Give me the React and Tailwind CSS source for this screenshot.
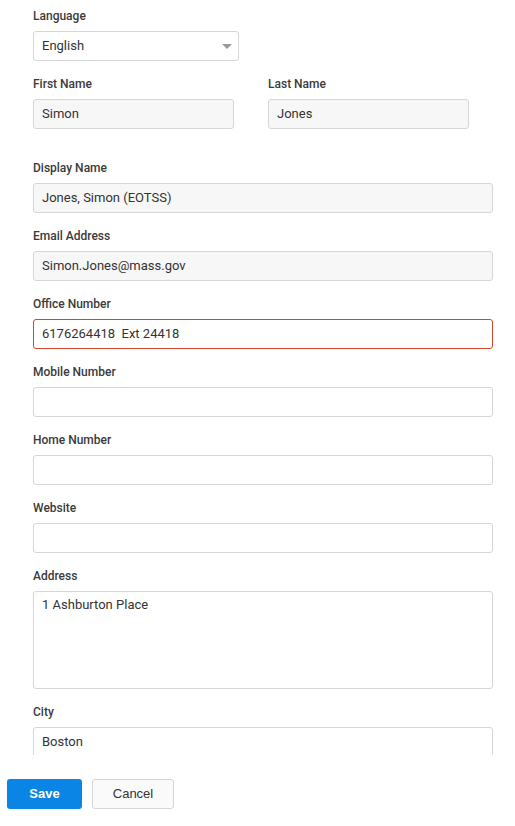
import React from 'react';

const font = { fontFamily: 'Roboto, "Noto Sans", sans-serif' };

function Label({ children }) {
  return <div className="mb-[7px] h-4 text-[12px] font-medium leading-4 text-[#3a3a3a]">{children}</div>;
}

function Field({ label, value = '', readOnly, invalid, width = 'w-[460px]', className = '' }) {
  const tone = invalid
    ? 'border-[#d5452b]'
    : 'border-[#d6d6d6]';
  const bg = readOnly ? 'bg-[#f7f7f7]' : 'bg-white';
  return (
    <div className={`mb-[15px] ${className}`}>
      <Label>{label}</Label>
      <div
        className={`flex h-[30px] ${width} items-center whitespace-pre rounded-[3px] border ${tone} ${bg} px-[8px] text-[13px] text-[#333]`}
      >
        {value}
      </div>
    </div>
  );
}

export default function App() {
  return (
    <div className="h-[826px] w-[515px] bg-white" style={font}>
      <div className="h-[755px] overflow-hidden pl-[33px] pt-2">
        <div className="mb-[15px]">
          <Label>Language</Label>
          <div className="flex h-[30px] w-[206px] items-center justify-between rounded-[3px] border border-[#d6d6d6] bg-white pl-[8px] pr-[6px] text-[13px] text-[#333]">
            <span>English</span>
            <svg width="10" height="5" viewBox="0 0 10 5">
              <path d="M0 0 L10 0 L5 5 Z" fill="#999" />
            </svg>
          </div>
        </div>

        <div className="flex gap-[34px]">
          <Field label="First Name" value="Simon" readOnly width="w-[201px]" />
          <Field label="Last Name" value="Jones" readOnly width="w-[201px]" />
        </div>

        <div className="h-4" />

        <Field label="Display Name" value="Jones, Simon (EOTSS)" readOnly />
        <Field label="Email Address" value="Simon.Jones@mass.gov" readOnly />
        <Field label="Office Number" value="6176264418  Ext 24418" invalid />
        <Field label="Mobile Number" />
        <Field label="Home Number" />
        <Field label="Website" />

        <div className="mb-[15px]">
          <Label>Address</Label>
          <div className="h-[98px] w-[460px] rounded-[3px] border border-[#d6d6d6] bg-white px-[8px] pt-[4px] text-[13px] leading-[18px] text-[#333]">
            1 Ashburton Place
          </div>
        </div>

        <Field label="City" value="Boston" />
      </div>

      <div
        className="mt-[24px] flex gap-[10px] pl-[7px]"
        style={{ fontFamily: '"Liberation Sans", Arial, sans-serif' }}
      >
        <button
          type="button"
          className="h-[30px] w-[75px] rounded-[3px] bg-[#0a84e5] pb-[1px] text-[13px] font-bold text-white"
        >
          Save
        </button>
        <button
          type="button"
          className="h-[30px] w-[82px] rounded-[3px] border border-[#d6d6d6] bg-[#fafafa] pb-[1px] text-[13px] text-[#333]"
        >
          Cancel
        </button>
      </div>
    </div>
  );
}
